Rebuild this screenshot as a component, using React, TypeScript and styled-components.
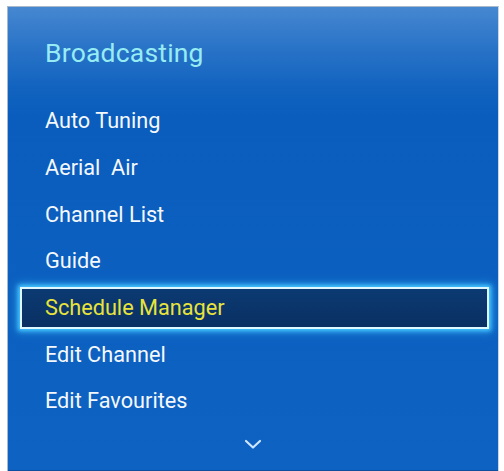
import styled, { createGlobalStyle } from "styled-components";

const GlobalStyle = createGlobalStyle`
  html, body {
    margin: 0;
    padding: 0;
    background: #ffffff;
  }
  body {
    font-family: Roboto, "Liberation Sans", Arial, sans-serif;
  }
`;

const items = [
  "Auto Tuning",
  "Aerial\u00a0\u00a0Air",
  "Channel List",
  "Guide",
  "Schedule Manager",
  "Edit Channel",
  "Edit Favourites",
];

const SELECTED = 4;

const App = () => {
  return (
    <>
      <GlobalStyle />
      <Frame>
        <Panel>
          <Title>Broadcasting</Title>
          <MenuList>
            {items.map((label, i) => (
              <MenuItem key={label} $selected={i === SELECTED}>
                {label}
              </MenuItem>
            ))}
          </MenuList>
          <More>
            <svg width="18" height="11" viewBox="0 0 18 11">
              <polyline
                points="2,2 9,8.5 16,2"
                fill="none"
                stroke="#cfe6ff"
                strokeWidth="2.2"
                strokeLinecap="round"
                strokeLinejoin="round"
              />
            </svg>
          </More>
        </Panel>
      </Frame>
    </>
  );
};

const Frame = styled.div`
  width: 504px;
  height: 471px;
  padding: 6px 5px 0 7px;
  box-sizing: border-box;
  overflow: hidden;
`;

const Panel = styled.div`
  height: 465px;
  box-sizing: border-box;
  border: 1px solid #a9b9cc;
  border-bottom: none;
  border-right-color: #c9d6e4;
  background: linear-gradient(
    180deg,
    #4687d0 0px,
    #2a74c8 40px,
    #1263bf 80px,
    #0a5dbd 110px,
    #0c60c0 300px,
    #0e62c2 100%
  );
  box-shadow: inset 0 -1px 0 #0b4f9e;
  display: flex;
  flex-direction: column;
  padding-top: 26px;
`;

const Title = styled.div`
  height: 40px;
  line-height: 40px;
  padding-left: 37px;
  font-size: 26.5px;
  color: #96ecf2;
  letter-spacing: 0.2px;
`;

const MenuList = styled.div`
  margin-top: 24.8px;
  display: flex;
  flex-direction: column;
`;

const MenuItem = styled.div<{ $selected?: boolean }>`
  height: 42px;
  margin: 2.35px 9px 2.35px 12px;
  padding-left: 23px;
  box-sizing: border-box;
  border: 2px solid ${(p) => (p.$selected ? "#dff8ff" : "transparent")};
  background: ${(p) =>
    p.$selected
      ? "linear-gradient(180deg, #0b3a72 0%, #0a3063 100%)"
      : "transparent"};
  box-shadow: ${(p) =>
    p.$selected ? "0 0 4px 2px #45c6ff, 0 0 9px 3px rgba(60,190,255,0.55)" : "none"};
  display: flex;
  align-items: center;
  font-size: 21.7px;
  line-height: 38px;
  color: ${(p) => (p.$selected ? "#e8e33c" : "#f4f8fc")};
  white-space: nowrap;
`;

const More = styled.div`
  margin-top: 14px;
  display: flex;
  justify-content: center;
`;

export default App;
